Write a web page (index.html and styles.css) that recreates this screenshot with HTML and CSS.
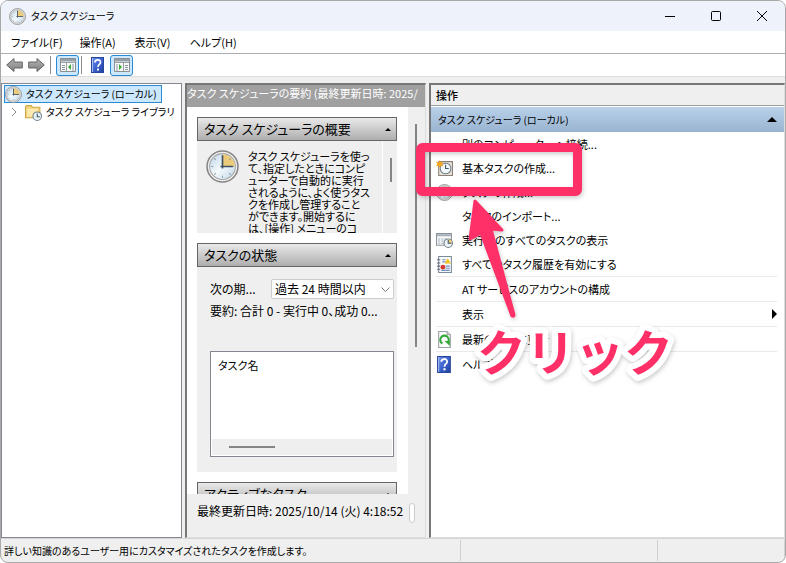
FILE: index.html
```html
<!DOCTYPE html>
<html lang="ja">
<head>
<meta charset="utf-8">
<title>タスク スケジューラ</title>
<link rel="stylesheet" href="styles.css">
</head>
<body>
<svg class="defs" aria-hidden="true">
  <defs>
    <linearGradient id="face" x1="0" y1="0" x2="1" y2="1">
      <stop offset="0" stop-color="#b9d3e6"/><stop offset=".5" stop-color="#f4f9fc"/><stop offset="1" stop-color="#bfd6e6"/>
    </linearGradient>
    <linearGradient id="blue" x1="0" y1="0" x2="1" y2="1">
      <stop offset="0" stop-color="#6f8fe6"/><stop offset=".5" stop-color="#3d63cf"/><stop offset="1" stop-color="#2243a0"/>
    </linearGradient>
    <linearGradient id="arrow" x1="0" y1="0" x2="0" y2="1">
      <stop offset="0" stop-color="#b5b5b5"/><stop offset="1" stop-color="#7d7d7d"/>
    </linearGradient>
    <symbol id="clock" viewBox="0 0 32 32">
      <circle cx="16" cy="16" r="15" fill="#eee" stroke="#858585" stroke-width="1.5"/>
      <circle cx="16" cy="16" r="12.5" fill="url(#face)" stroke="#a5a5a5"/>
      <path d="M16 16V4a12 12 0 0 1 12 12z" fill="#eccb7a"/>
      <path d="M16 5v2M16 25v2M5 16h2M25 16h2M8 8l1.500 1.500M24 8l-1.500 1.500M8 24l1.500-1.500M24 24l-1.500-1.500" stroke="#8b98a3"/>
      <path d="M16 5v13M14 16h12" stroke="#3f5260" stroke-width="1.6"/>
    </symbol>
    <symbol id="help" viewBox="0 0 13 16">
      <path d="M0 0h13v16H0z" fill="#26459c"/><path d="M1 1h11v14H1z" fill="url(#blue)"/>
      <path d="M1 1h1v14H1z" fill="#a9bdf1"/>
      <path d="M4 5.500C4 2 9.500 2 9.500 5.300 9.500 7.500 7 7.500 7 10" fill="none" stroke="#fff" stroke-width="1.700"/>
      <path d="M6 11.500h2v2H6z" fill="#fff"/>
    </symbol>
  </defs>
</svg>

<div class="window">
  <header class="titlebar">
    <svg class="icon16"><use href="#clock"/></svg>
    <h1>タスク スケジューラ</h1>
    <div class="winbtns">
      <button aria-label="最小化"><svg viewBox="0 0 12 12"><path d="M1 6.500h10"/></svg></button>
      <button aria-label="最大化"><svg viewBox="0 0 12 12"><rect x="1.500" y="1.500" width="9" height="9" rx="1"/></svg></button>
      <button aria-label="閉じる"><svg viewBox="0 0 12 12"><path d="M1 1l10 10M11 1L1 11"/></svg></button>
    </div>
  </header>

  <nav class="menubar">
    <button>ファイル(F)</button><button>操作(A)</button><button>表示(V)</button><button>ヘルプ(H)</button>
  </nav>

  <div class="toolbar">
    <button aria-label="戻る"><svg width="17" height="16" viewBox="0 0 17 16"><path d="M.7 8L8 1.500V5h8.300v6H8v3.500z" fill="url(#arrow)" stroke="#666"/></svg></button>
    <button aria-label="進む"><svg width="17" height="16" viewBox="0 0 17 16"><path d="M16.300 8L9 1.500V5H.7v6H9v3.500z" fill="url(#arrow)" stroke="#666"/></svg></button>
    <span class="tsep"></span>
    <button class="on" aria-label="コンソール ツリーの表示"><svg width="16" height="14" viewBox="0 0 16 14"><path d="M.5.5h15v13H.5z" fill="#f8f8f8" stroke="#8a8f94"/><path d="M1 1h14v2.500H1z" fill="#96a0a8"/><path d="M1 4.500h14M6.500 5v8" stroke="#9aa0a6"/><path d="M11 6v6L8 9z" fill="#3ba935"/><path d="M2 7.500h3M2 9.500h3M2 11.500h3M13 6v7" stroke="#8a96a0"/></svg></button>
    <span class="tsep"></span>
    <button class="helpbtn" aria-label="ヘルプ"><svg width="13" height="16"><use href="#help"/></svg></button>
    <button class="on" aria-label="操作ウィンドウの表示"><svg width="16" height="14" viewBox="0 0 16 14"><path d="M.5.5h15v13H.5z" fill="#f8f8f8" stroke="#8a8f94"/><path d="M1 1h14v2.500H1z" fill="#96a0a8"/><path d="M1 4.500h14M9.500 5v8" stroke="#9aa0a6"/><path d="M5 6v6l3-3z" fill="#3ba935"/><path d="M11 7.500h3M11 9.500h3M11 11.500h3M3 6v7" stroke="#8a96a0"/></svg></button>
  </div>

  <main class="panes">
    <section class="pane tree">
      <div class="node root"><svg class="icon16"><use href="#clock"/></svg><span>タスク スケジューラ (ローカル)</span></div>
      <div class="node child">
        <svg class="chev" viewBox="0 0 6 10"><path d="M1 1l4 4-4 4"/></svg>
        <svg class="icon16" viewBox="0 0 16 16"><path d="M.5 13V2.500l1-1H6l1 1.500h7v10z" fill="#f2d47c" stroke="#d0a845"/><path d="M2 4.500h10V12H2z" fill="#fbe9ae"/><circle cx="11.500" cy="11.500" r="4" fill="#e9f3f9" stroke="#71808b"/><path d="M11.500 9v3h2.500" fill="none" stroke="#456"/></svg>
        <span>タスク スケジューラ ライブラリ</span>
      </div>
    </section>

    <section class="pane summary">
      <h2>タスク スケジューラの要約 (最終更新日時: 2025/</h2>
      <div class="body">
        <div class="groups">
          <section class="group">
            <button class="grouphead">タスク スケジューラの概要<i class="up"></i></button>
            <div class="overview">
              <svg class="icon32"><use href="#clock"/></svg>
              <p>タスク スケジューラを使っ<br>て、指定したときにコンピ<br>ューターで自動的に実行<br>されるように、よく使うタス<br>クを作成し管理すること<br>ができます。開始するに<br>は、[操作] メニューのコ</p>
              <div class="thumbtrack"><i class="thumb"></i></div>
            </div>
          </section>
          <section class="group status">
            <button class="grouphead">タスクの状態<i class="up"></i></button>
            <div class="statusbody">
              <div class="period"><label for="period">次の期...</label>
                <div class="selectwrap"><select id="period"><option>過去 24 時間以内</option></select><svg viewBox="0 0 9 5"><path d="M.5.5l4 4 4-4"/></svg></div>
              </div>
              <p>要約: 合計 0 - 実行中 0、成功 0...</p>
              <div class="tasklist"><span>タスク名</span><div class="hbar"><i></i></div></div>
            </div>
          </section>
          <section class="group"><button class="grouphead">アクティブなタスク<i class="up"></i></button></section>
        </div>
        <div class="scroll"><i></i></div>
      </div>
      <footer><span>最終更新日時: 2025/10/14 (火) 4:18:52</span><i></i></footer>
    </section>

    <section class="pane actions">
      <h2>操作</h2>
      <h3>タスク スケジューラ (ローカル)<i class="up"></i></h3>
      <ul>
        <li><button><i></i>別のコンピューターへ接続...</button></li>
        <li><button><svg class="icon16" viewBox="0 0 16 16"><path d="M2.500 1.500h13v13h-13z" fill="#e8e2d8" stroke="#8a8078"/><circle cx="9" cy="8" r="5" fill="#f2f8fb" stroke="#71808b"/><path d="M9 4.500V8h3" fill="none" stroke="#456"/><path d="M3.500 0l1 2.300L7 1.500 5.800 3.700 7 6 4.500 5.300 3.500 7.500 2.500 5.300 0 6l1.200-2.300L0 1.500l2.500.8z" fill="#f5a623"/></svg>基本タスクの作成...</button></li>
        <li><button><svg class="icon16"><use href="#clock"/></svg>タスクの作成...</button></li>
        <li><button><i></i>タスクのインポート...</button></li>
        <li><button><svg class="icon16" viewBox="0 0 16 16"><path d="M.5 1.500h14v11H.5z" fill="#f7f8f9" stroke="#8b949c"/><path d="M1 2h13v2H1z" fill="#a5b0ba"/><path d="M2 6.500h8M2 8.500h5M2 10.500h5" stroke="#a5b0ba" stroke-dasharray="2 1"/><circle cx="11.500" cy="10.500" r="4" fill="#eaf3f8" stroke="#71808b"/><path d="M11.500 7v3.500H15A3.500 3.500 0 0 0 11.500 7z" fill="#edc96e"/><path d="M11.500 7.500v3h3" fill="none" stroke="#456"/></svg>実行中のすべてのタスクの表示</button></li>
        <li><button><svg class="icon16" viewBox="0 0 16 16"><path d="M2.500.5h12v15h-12z" fill="#fafafa" stroke="#7c8ca0"/><path d="M1 3.500h3M1 6.500h3M1 9.500h3M1 12.500h3" stroke="#667"/><path d="M6 3.500h3M6 5.500h3M9 9.500h4M9 11.500h4M5 13.500h8" stroke="#6e8fc0"/><path d="M11 2l3 5H8z" fill="#f5c21b"/><circle cx="6.500" cy="10.500" r="2.200" fill="#d43a2f"/></svg>すべてのタスク履歴を有効にする</button></li>
        <li class="sep"><button><i></i>AT サービスのアカウントの構成</button></li>
        <li class="sep"><button><i></i>表示<b class="right"></b></button></li>
        <li class="sep"><button><svg class="icon16" viewBox="0 0 16 16"><path d="M2.500.5h8l3 3v12h-11z" fill="#fcfcfc" stroke="#9aa0a6"/><path d="M10.500.5v3h3" fill="#ddd" stroke="#9aa0a6"/><path d="M6 11.800A4 4 0 1 1 11 11" fill="none" stroke="#35a83a" stroke-width="2"/><path d="M8 9.500h5V14z" fill="#35a83a"/></svg>最新の情報に更新</button></li>
        <li class="sep"><button><svg class="icon16" viewBox="-1 0 16 16"><use href="#help" width="13" height="16"/></svg>ヘルプ</button></li>
      </ul>
    </section>
  </main>

  <footer class="statusbar"><span>詳しい知識のあるユーザー用にカスタマイズされたタスクを作成します。</span><span></span><span></span></footer>
</div>

<svg class="callout" width="786" height="563" viewBox="0 0 786 563">
  <g class="mark">
    <rect x="420.500" y="147.500" width="157" height="44" rx="2"/>
    <path class="pointer" d="M475 201L470 239L481 233L512 316Q514 317 514 315L491 229L502 230Z"/>
    <text x="477" y="371">クリック</text>
  </g>
</svg>
</body>
</html>
```
FILE: styles.css
```css
* { box-sizing: border-box; }
body { margin: 0; background: #fff; color: #000; font: 11px/16px "Noto Sans CJK JP", sans-serif; font-feature-settings: "palt"; }
h1, h2, h3, p, ul { margin: 0; padding: 0; font-size: 11px; font-weight: 400; }
ul { list-style: none; }
button { border: 0; padding: 0; background: none; color: inherit; font: inherit; font-feature-settings: inherit; }
svg { display: block; flex: none; }
.defs { position: absolute; width: 0; height: 0; }
.icon16 { width: 17px; height: 17px; }
.icon32 { width: 33px; height: 33px; }

.window { height: 100vh; display: flex; flex-direction: column; border: 1px solid #a9a9a9; border-radius: 8px; background: #efefef; overflow: hidden; white-space: nowrap; }

.titlebar { height: 30px; flex: none; display: flex; align-items: center; padding-left: 8px; background: #eef2fa; }
.titlebar h1 { flex: 1; padding-left: 5px; font-size: 10px; }
.winbtns { display: flex; }
.winbtns button { width: 46px; height: 28px; display: grid; place-items: center; }
.winbtns svg { width: 12px; height: 12px; fill: none; stroke: #000; }

.menubar { height: 23px; flex: none; display: flex; align-items: center; gap: 17px; padding-left: 10px; background: #fff; border-bottom: 1px solid #adadb5; }
.menubar button { min-width: 38px; text-align: left; }

.toolbar { height: 23px; flex: none; display: flex; align-items: center; gap: 5px; padding-left: 5px; background: #fff; border-bottom: 1px solid #dedede; }
.toolbar .on { width: 23px; height: 21px; display: grid; place-items: center; background: #cce8ff; border: 1px solid #2a8ad4; border-radius: 3px; }
.tsep { width: 1px; height: 18px; background: #8d8d8d; }
.on + .tsep { margin-left: -3px; }
.helpbtn { padding: 0 1px 0 4px; }

.panes { flex: 1; min-height: 0; display: grid; grid-template-columns: 181px 241px 1fr; gap: 3px; padding-top: 6px; }
.pane { min-width: 0; overflow: hidden; display: flex; flex-direction: column; border: 1px solid #828790; background: #fff; }

.tree { padding: 1px 2px; font-size: 10px; }
.node { height: 18px; display: flex; align-items: center; gap: 4px; }
.root { align-self: flex-start; padding: 0 4px 0 0; background: #cce8ff; border: 1px solid #2a8ad4; }
.child { padding-left: 7px; }
.chev { width: 6px; height: 10px; margin-right: 4px; fill: none; stroke: #888; }

.summary { border-width: 2px 1px 1px 2px; border-color: #777 #ddd #ddd #777; background: #efefef; font-size: 12px; }
.summary h2 { height: 22px; flex: none; overflow: hidden; background: #a0a0a0; color: #fff; }
.body { flex: 1; min-height: 0; display: flex; background: #fff; }
.groups { flex: 1; min-width: 0; padding: 10px 11px 0 10px; overflow: hidden; display: flex; flex-direction: column; gap: 10px; }
.group { flex: none; background: #efefef; }
.grouphead { width: 100%; height: 24px; display: flex; align-items: center; justify-content: space-between; padding: 0 5px 0 6px; border: 1px solid #666; background: linear-gradient(#e9e9e9, #aeaeae); font-size: 13px; }
.up { border: 3px solid transparent; border-top: 0; border-bottom: 3px solid #000; }
.overview { height: 92px; display: flex; gap: 9px; padding: 9px 5px 0 9px; overflow: hidden; }
.overview p { flex: 1; line-height: 12px; }
.thumbtrack { border-left: 1px solid #fff; padding: 8px 0 0 7px; margin-top: -9px; }
.thumb { display: block; width: 2px; height: 24px; margin-top: 9px; background: #858585; }
.statusbody { height: 205px; display: flex; flex-direction: column; padding: 12px 3px 15px 13px; }
.period { display: flex; align-items: center; justify-content: space-between; }
.selectwrap { width: 123px; position: relative; }
.selectwrap select { width: 100%; height: 20px; padding: 0 3px; appearance: none; border: 1px solid #ccc; border-radius: 2px; background: #fff; color: #000; font: inherit; font-feature-settings: inherit; }
.selectwrap svg { position: absolute; right: 4px; top: 8px; width: 9px; height: 5px; fill: none; stroke: #777; }
.statusbody p { margin: 4px 0 32px; font-size: 12px; }
.tasklist { flex: 1; display: flex; flex-direction: column; justify-content: space-between; border: 1px solid #828790; background: #fff; padding: 5px 1px 1px; font-size: 11px; }
.tasklist span { padding-left: 6px; }
.hbar { height: 16px; padding: 7px 17px; background: #efefef; }
.hbar i { display: block; width: 46px; height: 2px; background: #858585; }
.scroll { width: 17px; padding: 17px 7px; background: #efefef; }
.scroll i { display: block; width: 2px; height: 223px; background: #858585; }
.summary footer { height: 43px; display: flex; justify-content: space-between; padding: 9px 10px 0; }
.summary footer i { width: 6px; height: 20px; border: 1px solid #ccc; border-radius: 3px; background: #fff; }

.actions { border-width: 2px 1px 1px 2px; border-color: #777 #ddd #ddd #777; }
.actions h2 { height: 21px; flex: none; padding: 2px 5px; background: #efefef; border-bottom: 1px solid #a0a0a0; font-weight: 500; }
.actions h3 { height: 25px; flex: none; display: flex; align-items: center; justify-content: space-between; padding: 0 7px; margin-top: 1px; background: linear-gradient(#b9d1ea, #99b4d1); font-size: 10px; }
.actions h3 .up { border-width: 0 5px 5px; }
.actions li { margin: 0 7px 0 5px; }
.actions li.sep { border-top: 1px solid #e9e9e9; }
.actions li button { width: 100%; height: 24px; display: flex; align-items: center; gap: 9px; }
.actions li button > i { width: 17px; }
.right { margin-left: auto; border: 5px solid transparent; border-right: 0; border-left-color: #000; }

.statusbar { height: 24px; flex: none; display: grid; grid-template-columns: 460px 197px 1fr; align-items: center; border-top: 1px solid #d5d5d5; font-size: 10px; }
.statusbar span { height: 21px; line-height: 21px; padding-left: 3px; border-right: 1px solid #d0d0d0; }

.callout { position: absolute; left: 0; top: 0; pointer-events: none; }
.mark { filter: drop-shadow(1px 2px 2px rgb(0 0 0 / 20%)); }
.mark rect { fill: none; stroke: #ff3068; stroke-width: 9px; }
.pointer { fill: #ff3068; stroke: #ff3068; stroke-width: 3px; stroke-linejoin: round; }
.mark text { font: 700 49px "Noto Sans CJK JP", sans-serif; font-feature-settings: normal; fill: #ff3068; stroke: #fff; stroke-width: 12px; stroke-linejoin: round; paint-order: stroke; }
```
